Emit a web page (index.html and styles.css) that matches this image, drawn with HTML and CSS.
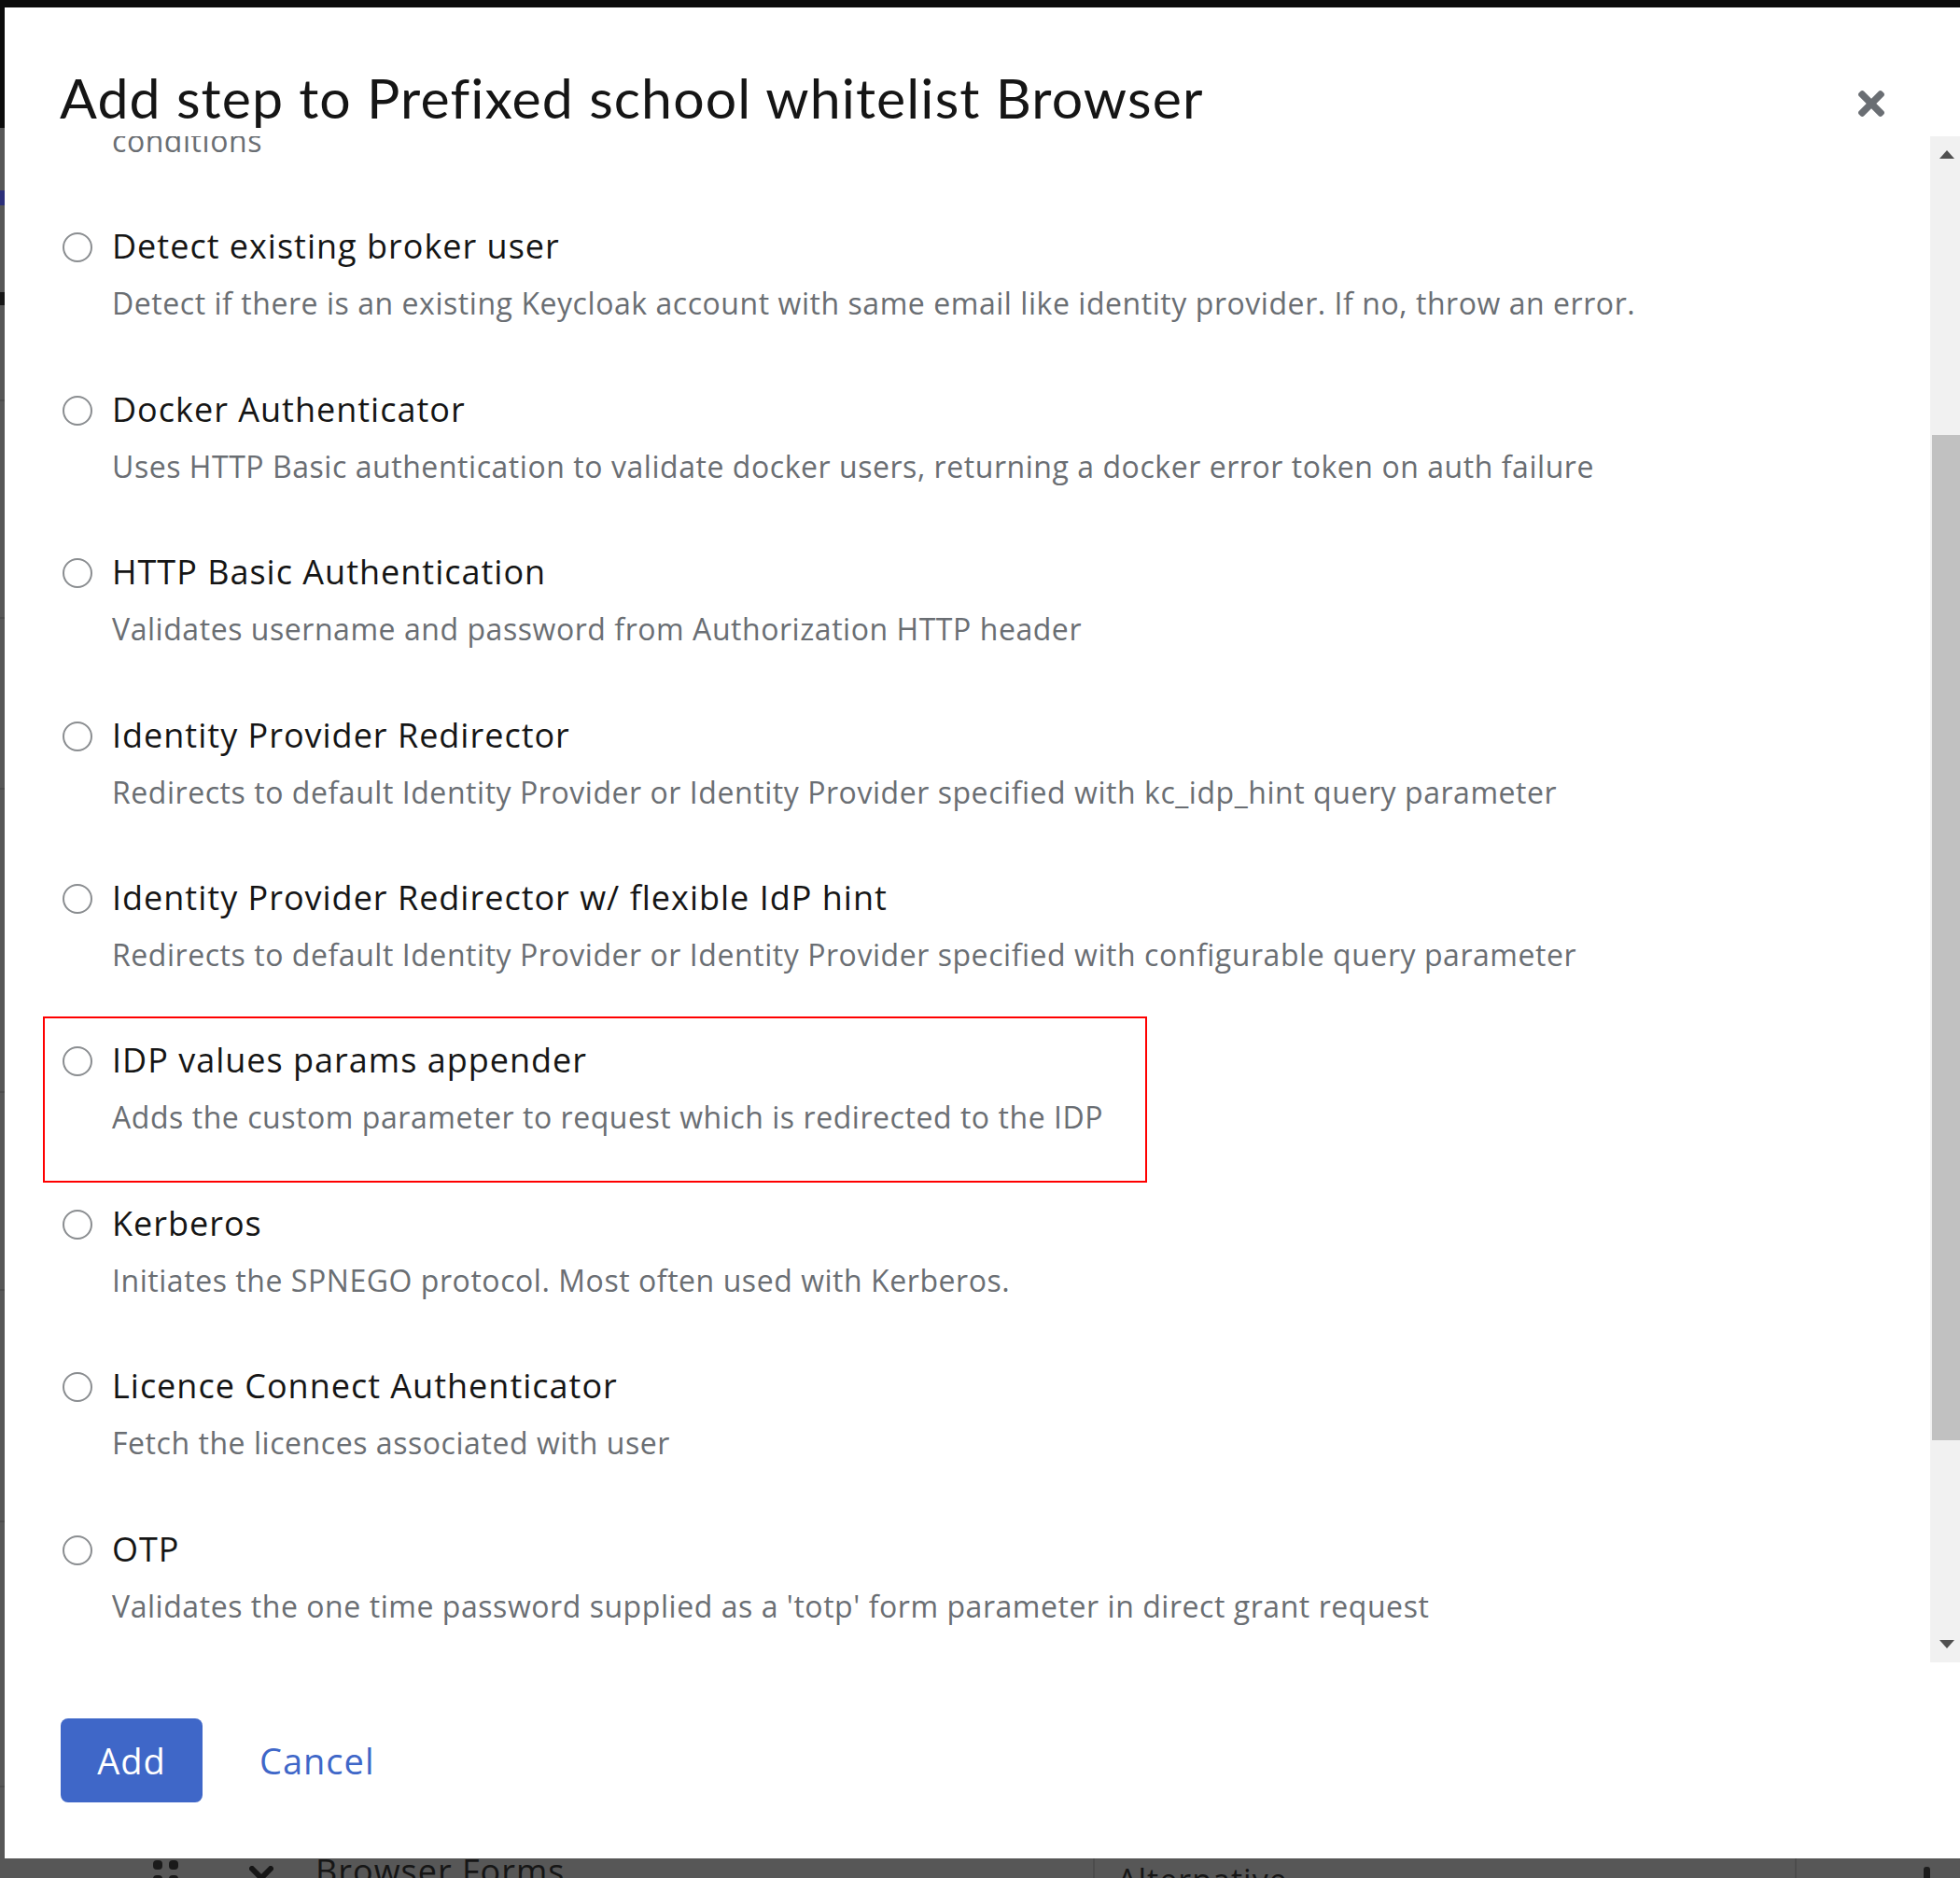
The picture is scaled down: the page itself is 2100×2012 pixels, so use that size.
FILE: index.html
```html
<!DOCTYPE html>
<html lang="en">
<head>
<meta charset="utf-8">
<title>Add step</title>
<link rel="stylesheet" href="styles.css">
</head>
<body>
<div class="backdrop">
  <div class="bg-header"></div>
  <div class="bg-main">
    <div class="bg-row r1"><span class="bg-mark blue"></span><span class="bg-mark dark"></span></div>
    <div class="bg-row r2"></div>
    <div class="bg-row r3"></div>
    <div class="bg-row r4"></div>
    <div class="bg-row r5"></div>
    <div class="bg-row r6"></div>
    <div class="bg-row r7"></div>
    <div class="bg-row last">
      <div class="cell c1">
        <svg class="grip" width="27" height="45" viewBox="0 0 27 45"><rect x="0" y="0" width="10" height="10" rx="4"/><rect x="17" y="0" width="10" height="10" rx="4"/><rect x="0" y="16" width="10" height="10" rx="4"/><rect x="17" y="16" width="10" height="10" rx="4"/><rect x="0" y="32" width="10" height="10" rx="4"/><rect x="17" y="32" width="10" height="10" rx="4"/></svg>
        <svg class="chev" width="26" height="18" viewBox="0 0 26 18"><path d="M3 3 L13 13 L23 3" fill="none" stroke="#161616" stroke-width="6" stroke-linecap="round" stroke-linejoin="round"/></svg>
        <span class="bg-text">Browser Forms</span>
      </div>
      <div class="cell c2"><span class="bg-text small">Alternative</span></div>
      <div class="cell c3"><span class="bar"></span></div>
    </div>
  </div>
</div>

<div class="modal">
  <header class="modal-header">
    <h1 class="modal-title">Add step to Prefixed school whitelist Browser</h1>
    <button class="close" aria-label="Close">
      <svg width="28" height="28" viewBox="0 80 352 352"><path fill="#6a6e73" d="M242.72 256l100.07-100.07c12.28-12.28 12.28-32.19 0-44.48l-22.24-22.24c-12.28-12.28-32.19-12.28-44.48 0L176 189.28 75.93 89.21c-12.28-12.28-32.19-12.28-44.48 0L9.21 111.45c-12.28 12.28-12.28 32.19 0 44.48L109.28 256 9.21 356.07c-12.28 12.28-12.28 32.19 0 44.48l22.24 22.24c12.28 12.28 32.2 12.28 44.48 0L176 322.72l100.07 100.07c12.28 12.28 32.2 12.28 44.48 0l22.24-22.24c12.28-12.28 12.28-32.19 0-44.48L242.72 256z"/></svg>
    </button>
  </header>

  <div class="modal-body">
    <div class="list">
      <div class="item">
        <span class="radio"></span>
        <div class="text">
          <div class="label">Condition - user configured</div>
          <div class="desc">Executes the current flow only if authenticators are configured and all required<br>conditions</div>
        </div>
      </div>
      <div class="item">
        <span class="radio"></span>
        <div class="text">
          <div class="label">Detect existing broker user</div>
          <div class="desc">Detect if there is an existing Keycloak account with same email like identity provider. If no, throw an error.</div>
        </div>
      </div>
      <div class="item">
        <span class="radio"></span>
        <div class="text">
          <div class="label">Docker Authenticator</div>
          <div class="desc">Uses HTTP Basic authentication to validate docker users, returning a docker error token on auth failure</div>
        </div>
      </div>
      <div class="item">
        <span class="radio"></span>
        <div class="text">
          <div class="label">HTTP Basic Authentication</div>
          <div class="desc">Validates username and password from Authorization HTTP header</div>
        </div>
      </div>
      <div class="item">
        <span class="radio"></span>
        <div class="text">
          <div class="label">Identity Provider Redirector</div>
          <div class="desc">Redirects to default Identity Provider or Identity Provider specified with kc_idp_hint query parameter</div>
        </div>
      </div>
      <div class="item">
        <span class="radio"></span>
        <div class="text">
          <div class="label">Identity Provider Redirector w/ flexible IdP hint</div>
          <div class="desc">Redirects to default Identity Provider or Identity Provider specified with configurable query parameter</div>
        </div>
      </div>
      <div class="item highlighted">
        <span class="radio"></span>
        <div class="text">
          <div class="label">IDP values params appender</div>
          <div class="desc">Adds the custom parameter to request which is redirected to the IDP</div>
        </div>
        <span class="mark-box"></span>
      </div>
      <div class="item">
        <span class="radio"></span>
        <div class="text">
          <div class="label">Kerberos</div>
          <div class="desc">Initiates the SPNEGO protocol. Most often used with Kerberos.</div>
        </div>
      </div>
      <div class="item">
        <span class="radio"></span>
        <div class="text">
          <div class="label">Licence Connect Authenticator</div>
          <div class="desc">Fetch the licences associated with user</div>
        </div>
      </div>
      <div class="item">
        <span class="radio"></span>
        <div class="text">
          <div class="label">OTP</div>
          <div class="desc">Validates the one time password supplied as a 'totp' form parameter in direct grant request</div>
        </div>
      </div>
      <div class="item">
        <span class="radio"></span>
        <div class="text">
          <div class="label">Password</div>
          <div class="desc">Validates the password supplied as a 'password' form parameter in direct grant request</div>
        </div>
      </div>
    </div>
    <div class="scrollbar">
      <span class="arrow up"></span>
      <span class="thumb"></span>
      <span class="arrow down"></span>
    </div>
  </div>

  <footer class="modal-footer">
    <button class="btn primary">Add</button>
    <button class="btn link">Cancel</button>
  </footer>
</div>
</body>
</html>
```

FILE: styles.css
```css
* { box-sizing: border-box; }

html, body {
  margin: 0;
  padding: 0;
}

body {
  width: 2100px;
  height: 2012px;
  overflow: hidden;
  position: relative;
  font-family: "Open Sans", "Liberation Sans", sans-serif;
  background: #575757;
}

/* ---------- page behind the overlay ---------- */
.backdrop {
  width: 2100px;
  height: 2012px;
  display: flex;
  flex-direction: column;
}

.bg-header {
  height: 137px;
  background: #0b0b0b;
  flex: none;
}

.bg-main {
  flex: 1;
  display: flex;
  flex-direction: column;
  background: #575757;
}

.bg-row {
  flex: none;
  border-top: 2px solid #4c4c4c;
  position: relative;
}
.bg-row.r1 { height: 291px; border-top: none; }
.bg-row.r2 { height: 233px; }
.bg-row.r3 { height: 183px; }
.bg-row.r4 { height: 325px; }
.bg-row.r5 { height: 212px; }
.bg-row.r6 { height: 248px; }
.bg-row.r7 { height: 284px; }
.bg-row.last {
  flex: 1;
  display: flex;
}

.bg-mark {
  display: block;
  width: 5px;
}
.bg-mark.blue {
  height: 16px;
  margin-top: 67px;
  background: #2c2f7a;
}
.bg-mark.dark {
  height: 14px;
  margin-top: 93px;
  background: #161616;
}

.cell {
  display: flex;
  align-items: flex-start;
  padding-top: 78px;
}
.cell.c1 {
  width: 1173px;
  border-right: 2px solid #4c4c4c;
  padding-left: 164px;
}
.cell.c2 {
  width: 752px;
  border-right: 2px solid #4c4c4c;
  padding-left: 24px;
  padding-top: 88px;
}
.cell.c3 {
  flex: 1;
  padding-left: 136px;
  padding-top: 85px;
}

.grip { fill: #1a1a1a; flex: none; }
.chev { margin-left: 76px; margin-top: 6px; flex: none; }

.bg-text {
  margin-left: 45px;
  margin-top: -6px;
  font-size: 36px;
  line-height: 1;
  letter-spacing: 1px;
  color: #161616;
  white-space: nowrap;
}
.bg-text.small {
  margin-left: 0;
  font-size: 34px;
}

.bar {
  display: block;
  width: 7px;
  height: 30px;
  border-radius: 3px;
  background: #1d1d1d;
}

/* ---------- modal ---------- */
.modal {
  position: absolute;
  left: 5px;
  top: 8px;
  width: 2095px;
  height: 1983px;
  background: #ffffff;
  display: flex;
  flex-direction: column;
}

.modal-header {
  height: 138px;
  flex: none;
  position: relative;
  padding: 61px 0 0 59px;
}

.modal-title {
  margin: 0;
  font-family: "Lato", "Open Sans", sans-serif;
  font-size: 59px;
  line-height: 72px;
  font-weight: 400;
  letter-spacing: 1.1px;
  color: #151515;
  white-space: nowrap;
}

.close {
  position: absolute;
  left: 1986px;
  top: 89px;
  width: 28px;
  height: 28px;
  padding: 0;
  border: none;
  background: none;
  display: block;
}
.close svg { display: block; }

.modal-body {
  height: 1635px;
  flex: none;
  position: relative;
  overflow: hidden;
}

.list {
  margin-top: -131px;
  padding-left: 62px;
  display: flex;
  flex-direction: column;
  gap: 62.4px;
}

.item {
  position: relative;
  display: grid;
  grid-template-columns: 32px 1fr;
  column-gap: 21px;
  align-items: start;
}

.radio {
  display: block;
  width: 32px;
  height: 32px;
  margin-top: 12px;
  border: 2px solid #8a8d90;
  border-radius: 50%;
  background: #fff;
}

.label {
  font-size: 36px;
  line-height: 54px;
  letter-spacing: 1px;
  color: #151515;
  white-space: nowrap;
}

.desc {
  margin-top: 10px;
  font-size: 32px;
  line-height: 48px;
  letter-spacing: 0.55px;
  color: #6a6e73;
  white-space: nowrap;
}

.mark-box {
  position: absolute;
  left: -21px;
  top: -20px;
  width: 1183px;
  height: 178px;
  border: 2px solid #ff0000;
  pointer-events: none;
}

.scrollbar {
  position: absolute;
  top: 0;
  right: 0;
  width: 32px;
  height: 100%;
  background: #f1f1f1;
}

.thumb {
  position: absolute;
  left: 2px;
  right: 0;
  top: 320px;
  height: 1077px;
  background: #c1c1c1;
}

.arrow {
  position: absolute;
  left: 10px;
  width: 0;
  height: 0;
  border-left: 8.5px solid transparent;
  border-right: 8.5px solid transparent;
}
.arrow.up {
  top: 15px;
  border-bottom: 9px solid #505050;
}
.arrow.down {
  bottom: 15px;
  border-top: 9px solid #505050;
}

.modal-footer {
  flex: 1;
  display: flex;
  align-items: flex-start;
  padding: 60px 0 0 60px;
}

.btn {
  font-family: inherit;
  font-size: 38px;
  letter-spacing: 1px;
  border: none;
  padding: 0;
  height: 90px;
  background: none;
  cursor: pointer;
}

.btn.primary {
  width: 152px;
  background: #3f67c8;
  color: #ffffff;
  border-radius: 8px;
}

.btn.link {
  margin-left: 61px;
  color: #3f67c8;
}
```
